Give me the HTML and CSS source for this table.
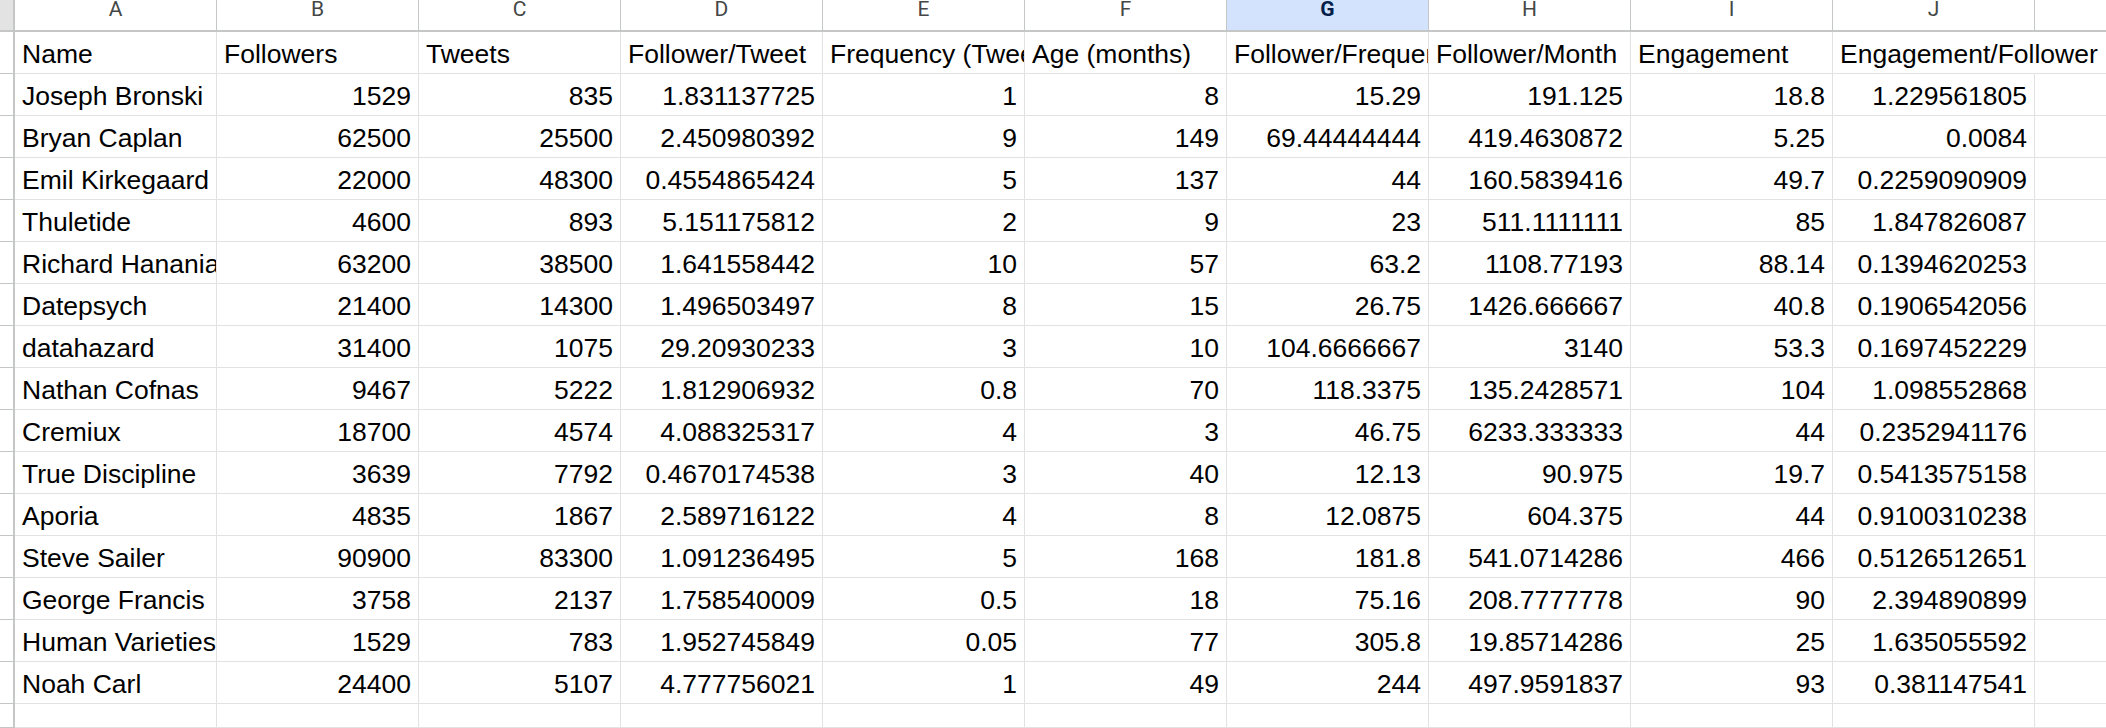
FILE: index.html
```html
<!DOCTYPE html>
<html>
<head>
<meta charset="utf-8">
<title>Sheet</title>
<link rel="stylesheet" href="styles.css">
</head>
<body>
<div class="sheet">
  <div class="corner"></div>
  <div class="ch">A</div><div class="ch">B</div><div class="ch">C</div><div class="ch">D</div><div class="ch">E</div><div class="ch">F</div><div class="ch sel">G</div><div class="ch">H</div><div class="ch">I</div><div class="ch">J</div><div class="ch last"></div>

  <div class="rh"></div><div class="c">Name</div><div class="c">Followers</div><div class="c">Tweets</div><div class="c">Follower/Tweet</div><div class="c">Frequency (Tweets/day)</div><div class="c">Age (months)</div><div class="c">Follower/Frequency</div><div class="c">Follower/Month</div><div class="c">Engagement</div><div class="c spill">Engagement/Follower</div><div class="c last"></div>

  <div class="rh"></div><div class="c">Joseph Bronski</div><div class="c n">1529</div><div class="c n">835</div><div class="c n">1.831137725</div><div class="c n">1</div><div class="c n">8</div><div class="c n">15.29</div><div class="c n">191.125</div><div class="c n">18.8</div><div class="c n">1.229561805</div><div class="c last"></div>

  <div class="rh"></div><div class="c">Bryan Caplan</div><div class="c n">62500</div><div class="c n">25500</div><div class="c n">2.450980392</div><div class="c n">9</div><div class="c n">149</div><div class="c n">69.44444444</div><div class="c n">419.4630872</div><div class="c n">5.25</div><div class="c n">0.0084</div><div class="c last"></div>

  <div class="rh"></div><div class="c">Emil Kirkegaard</div><div class="c n">22000</div><div class="c n">48300</div><div class="c n">0.4554865424</div><div class="c n">5</div><div class="c n">137</div><div class="c n">44</div><div class="c n">160.5839416</div><div class="c n">49.7</div><div class="c n">0.2259090909</div><div class="c last"></div>

  <div class="rh"></div><div class="c">Thuletide</div><div class="c n">4600</div><div class="c n">893</div><div class="c n">5.151175812</div><div class="c n">2</div><div class="c n">9</div><div class="c n">23</div><div class="c n">511.1111111</div><div class="c n">85</div><div class="c n">1.847826087</div><div class="c last"></div>

  <div class="rh"></div><div class="c">Richard Hanania</div><div class="c n">63200</div><div class="c n">38500</div><div class="c n">1.641558442</div><div class="c n">10</div><div class="c n">57</div><div class="c n">63.2</div><div class="c n">1108.77193</div><div class="c n">88.14</div><div class="c n">0.1394620253</div><div class="c last"></div>

  <div class="rh"></div><div class="c">Datepsych</div><div class="c n">21400</div><div class="c n">14300</div><div class="c n">1.496503497</div><div class="c n">8</div><div class="c n">15</div><div class="c n">26.75</div><div class="c n">1426.666667</div><div class="c n">40.8</div><div class="c n">0.1906542056</div><div class="c last"></div>

  <div class="rh"></div><div class="c">datahazard</div><div class="c n">31400</div><div class="c n">1075</div><div class="c n">29.20930233</div><div class="c n">3</div><div class="c n">10</div><div class="c n">104.6666667</div><div class="c n">3140</div><div class="c n">53.3</div><div class="c n">0.1697452229</div><div class="c last"></div>

  <div class="rh"></div><div class="c">Nathan Cofnas</div><div class="c n">9467</div><div class="c n">5222</div><div class="c n">1.812906932</div><div class="c n">0.8</div><div class="c n">70</div><div class="c n">118.3375</div><div class="c n">135.2428571</div><div class="c n">104</div><div class="c n">1.098552868</div><div class="c last"></div>

  <div class="rh"></div><div class="c">Cremiux</div><div class="c n">18700</div><div class="c n">4574</div><div class="c n">4.088325317</div><div class="c n">4</div><div class="c n">3</div><div class="c n">46.75</div><div class="c n">6233.333333</div><div class="c n">44</div><div class="c n">0.2352941176</div><div class="c last"></div>

  <div class="rh"></div><div class="c">True Discipline</div><div class="c n">3639</div><div class="c n">7792</div><div class="c n">0.4670174538</div><div class="c n">3</div><div class="c n">40</div><div class="c n">12.13</div><div class="c n">90.975</div><div class="c n">19.7</div><div class="c n">0.5413575158</div><div class="c last"></div>

  <div class="rh"></div><div class="c">Aporia</div><div class="c n">4835</div><div class="c n">1867</div><div class="c n">2.589716122</div><div class="c n">4</div><div class="c n">8</div><div class="c n">12.0875</div><div class="c n">604.375</div><div class="c n">44</div><div class="c n">0.9100310238</div><div class="c last"></div>

  <div class="rh"></div><div class="c">Steve Sailer</div><div class="c n">90900</div><div class="c n">83300</div><div class="c n">1.091236495</div><div class="c n">5</div><div class="c n">168</div><div class="c n">181.8</div><div class="c n">541.0714286</div><div class="c n">466</div><div class="c n">0.5126512651</div><div class="c last"></div>

  <div class="rh"></div><div class="c">George Francis</div><div class="c n">3758</div><div class="c n">2137</div><div class="c n">1.758540009</div><div class="c n">0.5</div><div class="c n">18</div><div class="c n">75.16</div><div class="c n">208.7777778</div><div class="c n">90</div><div class="c n">2.394890899</div><div class="c last"></div>

  <div class="rh"></div><div class="c">Human Varieties</div><div class="c n">1529</div><div class="c n">783</div><div class="c n">1.952745849</div><div class="c n">0.05</div><div class="c n">77</div><div class="c n">305.8</div><div class="c n">19.85714286</div><div class="c n">25</div><div class="c n">1.635055592</div><div class="c last"></div>

  <div class="rh"></div><div class="c">Noah Carl</div><div class="c n">24400</div><div class="c n">5107</div><div class="c n">4.777756021</div><div class="c n">1</div><div class="c n">49</div><div class="c n">244</div><div class="c n">497.9591837</div><div class="c n">93</div><div class="c n">0.381147541</div><div class="c last"></div>

  <div class="rh"></div><div class="c"></div><div class="c"></div><div class="c"></div><div class="c"></div><div class="c"></div><div class="c"></div><div class="c"></div><div class="c"></div><div class="c"></div><div class="c"></div><div class="c last"></div>
</div>
</body>
</html>
```

FILE: styles.css
```css
html, body {
  margin: 0;
  padding: 0;
  background: #ffffff;
}

.sheet {
  width: 2106px;
  height: 728px;
  overflow: hidden;
  display: grid;
  grid-template-columns: 15px repeat(10, 202px) 1fr;
  grid-template-rows: 32px repeat(16, 42px) 1fr;
  font-family: "Liberation Sans", Arial, sans-serif;
  background: #ffffff;
}

.corner {
  background: #e3e3e3;
  border-right: 2px solid #c4c7c5;
  border-bottom: 2px solid #c4c7c5;
  box-sizing: border-box;
}

.ch {
  box-sizing: border-box;
  border-right: 1px solid #c4c7c5;
  border-bottom: 2px solid #c4c7c5;
  font-family: Roboto, "Liberation Sans", sans-serif;
  font-size: 21px;
  line-height: 16px;
  padding-top: 1px;
  color: #444746;
  text-align: center;
  background: #ffffff;
}

.ch.sel {
  background: #d3e3fd;
  color: #041e49;
  font-weight: 700;
}

.ch.last {
  border-right: none;
}

.rh {
  box-sizing: border-box;
  border-right: 2px solid #c4c7c5;
  border-bottom: 1px solid #c4c7c5;
  background: #ffffff;
}

.c {
  box-sizing: border-box;
  border-right: 1px solid #e2e2e2;
  border-bottom: 1px solid #e2e2e2;
  font-size: 26.5px;
  line-height: 38px;
  padding: 3px 7px 0 7px;
  color: #000000;
  white-space: nowrap;
  overflow: hidden;
}

.c.n {
  text-align: right;
}

.c.spill {
  overflow: visible;
  border-right-color: transparent;
  position: relative;
  z-index: 1;
}

.c.last {
  border-right: none;
}
```
